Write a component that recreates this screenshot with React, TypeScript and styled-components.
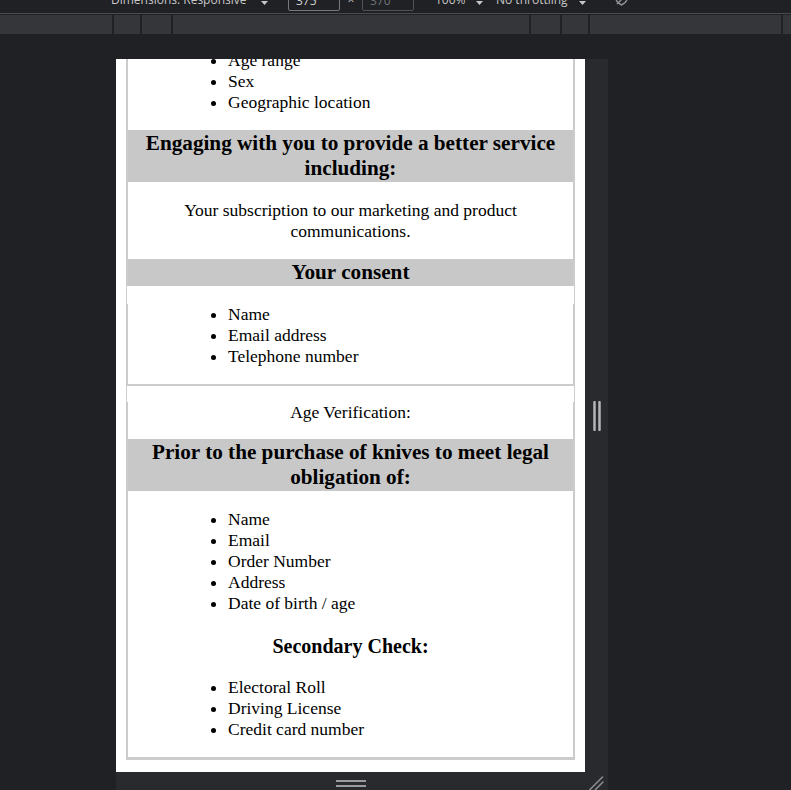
import styled, { createGlobalStyle } from 'styled-components';

const GlobalStyle = createGlobalStyle`
  html, body {
    margin: 0;
    padding: 0;
    background: #202124;
  }
`;

const Workspace = styled.div`
  width: 791px;
  height: 790px;
  overflow: hidden;
  background: #202124;
  display: flex;
  flex-direction: column;
  font-family: "Open Sans", "Noto Sans", sans-serif;
`;

const Toolbar = styled.div`
  height: 13px;
  flex: none;
  display: flex;
  align-items: flex-start;
  overflow: hidden;
  color: #c7c7c7;
  font-size: 12px;
`;

const ToolLabel = styled.span<{ $ml?: number; $w: number; $center?: boolean }>`
  flex: none;
  margin-left: ${({ $ml }) => $ml ?? 0}px;
  width: ${({ $w }) => $w}px;
  margin-top: -8px;
  line-height: 16px;
  white-space: nowrap;
  text-align: ${({ $center }) => ($center ? 'center' : 'left')};
`;

const Caret = styled.span<{ $w: number }>`
  flex: none;
  width: ${({ $w }) => $w}px;
  display: flex;
  align-items: flex-start;
  padding-top: 1px;
`;

const SizeInput = styled.div<{ $dim?: boolean; $ml?: number }>`
  flex: none;
  box-sizing: border-box;
  width: 52px;
  height: 20px;
  margin-top: -9px;
  margin-left: ${({ $ml }) => $ml ?? 0}px;
  padding-left: 7px;
  border: 1px solid ${({ $dim }) => ($dim ? '#4f5256' : '#75787c')};
  border-radius: 2px;
  color: ${({ $dim }) => ($dim ? '#6f7276' : '#d4d4d4')};
  line-height: 18px;
`;

const IconSlot = styled.span<{ $ml: number }>`
  flex: none;
  margin-left: ${({ $ml }) => $ml}px;
  margin-top: -10px;
  display: flex;
`;

const Separator = styled.div`
  height: 1px;
  flex: none;
  background: #4a4c50;
  margin-bottom: 1px;
`;

const Ruler = styled.div`
  height: 19px;
  flex: none;
  display: flex;
  background: #35363a;
`;

const RulerSegment = styled.div<{ $w?: number }>`
  box-sizing: border-box;
  height: 100%;
  flex: ${({ $w }) => ($w ? `0 0 ${$w}px` : '1 1 auto')};
  border-right: ${({ $w }) => ($w ? '2px solid #202124' : 'none')};
`;

const DeviceFrame = styled.div`
  margin: 25px 0 0 116px;
  display: grid;
  grid-template-columns: 469px 23px;
  grid-template-rows: 713px 24px;
  width: 492px;
  background: #292a2d;
`;

const Page = styled.div`
  background: #fff;
  overflow: hidden;
  display: flex;
  flex-direction: column;
  justify-content: flex-end;
  padding: 0 10px 12px;
  font-family: "Liberation Serif", "Times New Roman", serif;
  font-size: 17.5px;
  line-height: 21px;
  color: #000;
`;

const Card = styled.div`
  flex: none;
  border: 1px solid #ccc;
  border-top: none;
  border-bottom-width: 2px;
`;

const Panel = styled.div<{ $contain?: boolean; $bottom?: number }>`
  display: ${({ $contain }) => ($contain ? 'flow-root' : 'block')};
  border-left: 1px solid #ccc;
  border-right: 1px solid #ccc;
  border-bottom: ${({ $bottom }) => ($bottom ? `${$bottom}px solid #ccc` : 'none')};
`;

const Heading = styled.h3`
  margin: 0;
  padding: 1px 0;
  background: #c8c8c8;
  text-align: center;
  font-size: 21.2px;
  line-height: 25px;
  font-weight: bold;
`;

const SubHeading = styled.h4`
  margin: 21px 0 19px;
  text-align: center;
  font-size: 20px;
  line-height: 23px;
  font-weight: bold;
`;

const List = styled.ul`
  margin: 1em 0;
  padding-left: 100px;
  list-style: disc;
`;

const Note = styled.p<{ $tight?: boolean }>`
  margin: ${({ $tight }) => ($tight ? '15.5px 0 16.5px' : '1em 0')};
  padding: 0 20px;
  text-align: center;
`;

const SideGrip = styled.div`
  grid-column: 2;
  grid-row: 1;
  display: flex;
  align-items: center;
  justify-content: center;
  gap: 2px;
`;

const GripBar = styled.span`
  width: 3px;
  height: 30px;
  border-radius: 1px;
  background: linear-gradient(90deg, #7d7f83, #b3b5b8, #7d7f83);
`;

const BottomGrip = styled.div`
  grid-column: 1;
  grid-row: 2;
  display: flex;
  flex-direction: column;
  align-items: center;
  gap: 3px;
  padding-top: 8px;
`;

const GripLine = styled.span`
  width: 30px;
  height: 2px;
  background: #9a9b9e;
`;

const Corner = styled.div`
  grid-column: 2;
  grid-row: 2;
`;

function CaretIcon() {
  return (
    <svg width="7" height="4" viewBox="0 0 7 4">
      <polygon points="0,0 7,0 3.5,4" fill="#c7c7c7" />
    </svg>
  );
}

const rulerStops = [114, 28, 31, 358, 31, 28, 193];

function App() {
  return (
    <>
      <GlobalStyle />
      <Workspace>
        <Toolbar>
          <ToolLabel $ml={111} $w={150}>Dimensions: Responsive</ToolLabel>
          <Caret $w={10}><CaretIcon /></Caret>
          <SizeInput $ml={17}>375</SizeInput>
          <ToolLabel $w={22} $center>×</ToolLabel>
          <SizeInput $dim>370</SizeInput>
          <ToolLabel $ml={21} $w={41}>100%</ToolLabel>
          <Caret $w={9}><CaretIcon /></Caret>
          <ToolLabel $ml={11} $w={83}>No throttling</ToolLabel>
          <Caret $w={10}><CaretIcon /></Caret>
          <IconSlot $ml={24}>
            <svg width="17" height="17" viewBox="0 0 17 17">
              <path d="M3 8.5a5.5 5.5 0 0 1 11 0c0 2.4-2.5 5-5.5 6.5C5.5 13.5 3 10.9 3 8.5z" fill="none" stroke="#8e9094" strokeWidth="1.4" />
              <path d="M4 14L14 4" stroke="#8e9094" strokeWidth="1.4" />
            </svg>
          </IconSlot>
        </Toolbar>
        <Separator />
        <Ruler>
          {rulerStops.map((w, i) => (
            <RulerSegment key={i} $w={w} />
          ))}
          <RulerSegment />
        </Ruler>

        <DeviceFrame>
          <Page>
            <Card>
              <Panel $contain>
                <Heading>Understanding our customers including:</Heading>
                <List>
                  <li>Age range</li>
                  <li>Sex</li>
                  <li>Geographic location</li>
                </List>
                <Heading>Engaging with you to provide a better service including:</Heading>
                <Note>Your subscription to our marketing and product communications.</Note>
                <Heading>Your consent</Heading>
              </Panel>
              <Panel $bottom={2}>
                <List>
                  <li>Name</li>
                  <li>Email address</li>
                  <li>Telephone number</li>
                </List>
              </Panel>
              <Panel $bottom={1}>
                <Note $tight>Age Verification:</Note>
                <Heading>Prior to the purchase of knives to meet legal obligation of:</Heading>
                <List>
                  <li>Name</li>
                  <li>Email</li>
                  <li>Order Number</li>
                  <li>Address</li>
                  <li>Date of birth / age</li>
                </List>
                <SubHeading>Secondary Check:</SubHeading>
                <List>
                  <li>Electoral Roll</li>
                  <li>Driving License</li>
                  <li>Credit card number</li>
                </List>
              </Panel>
            </Card>
          </Page>
          <SideGrip>
            <GripBar />
            <GripBar />
          </SideGrip>
          <BottomGrip>
            <GripLine />
            <GripLine />
          </BottomGrip>
          <Corner>
            <svg width="23" height="24" viewBox="0 0 23 24">
              <path d="M5 17.5L17.5 5M10.5 17.5L18 10" stroke="#8a8b8e" strokeWidth="1.6" strokeLinecap="round" />
            </svg>
          </Corner>
        </DeviceFrame>
      </Workspace>
    </>
  );
}

export default App;
